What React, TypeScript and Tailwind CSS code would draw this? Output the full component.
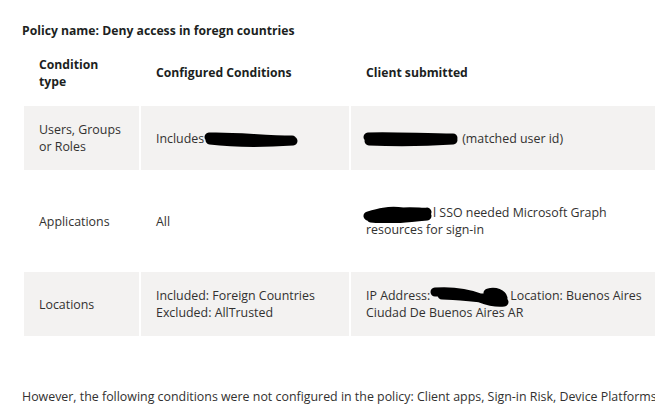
import React from "react";

function Scribble({ w, h, d, sw = 9, className = "" }: { w: number; h: number; d: string; sw?: number; className?: string }) {
  return (
    <svg width={w} height={h} viewBox={`0 0 ${w} ${h}`} className={`inline-block align-middle ${className}`}>
      <path d={d} stroke="#000" strokeWidth={sw} fill="none" strokeLinecap="round" strokeLinejoin="round" />
    </svg>
  );
}

export default function App() {
  const font = { fontFamily: '"Open Sans", "Noto Sans", sans-serif' };
  return (
    <div className="w-[655px] h-[404px] overflow-hidden bg-white text-[#323130] text-[12.4px] leading-[17px]" style={font}>
      <div className="pt-[22px] pl-[22px]">
        <div className="font-bold text-[#201f1e] text-[12.2px] leading-[16px] pt-[1px]">Policy name: Deny access in foregn countries</div>
        <div className="mt-[2px] ml-[2px] grid grid-cols-[115px_208px_400px] grid-rows-[63px_64px_98px_64px] gap-[2px] w-[727px]">
          <div className="flex items-center px-[15px] font-bold text-[12.2px] text-[#201f1e]">Condition<br />type</div>
          <div className="flex items-center px-[15px] font-bold text-[12.2px] text-[#201f1e]">Configured Conditions</div>
          <div className="flex items-center px-[15px] font-bold text-[12.2px] text-[#201f1e]">Client submitted</div>

          <div className="flex items-center px-[15px] bg-[#f3f2f1]">Users, Groups<br />or Roles</div>
          <div className="flex items-center px-[15px] bg-[#f3f2f1]">
            <span className="whitespace-nowrap">
              Includes
              <Scribble w={94} h={16} className="-my-2" d="M5 6 C 30 5, 60 9, 88 9 M6 9 C 30 12, 60 12, 89 10" />
            </span>
          </div>
          <div className="flex items-center pl-[12px] pr-[15px] bg-[#f3f2f1]">
            <span className="whitespace-nowrap">
              <Scribble w={96} h={16} className="-my-2" d="M5 6 C 30 5, 60 7, 90 7 M6 10 C 30 11, 60 11, 90 9" />
              {" "}(matched user id)
            </span>
          </div>

          <div className="flex items-center px-[15px]">Applications</div>
          <div className="flex items-center px-[15px]">All</div>
          <div className="flex items-center pl-[12px] pr-[15px]">
            <span>
              <span className="whitespace-nowrap">
                <Scribble w={70} h={18} className="-my-2" d="M5 11 C 15 8, 25 5, 40 7 C 52 6, 60 8, 64 7 M8 13 C 25 15, 35 14, 64 11" />
                l SSO needed Microsoft Graph
              </span>
              <br />
              <span className="pl-[3px]">resources for sign-in</span>
            </span>
          </div>

          <div className="flex items-center px-[15px] bg-[#f3f2f1]">Locations</div>
          <div className="flex items-center px-[15px] bg-[#f3f2f1]">Included: Foreign Countries<br />Excluded: AllTrusted</div>
          <div className="flex items-center px-[15px] bg-[#f3f2f1]">
            <span>
              <span className="whitespace-nowrap">
                IP Address:
                <Scribble w={80} h={22} className="-my-2" d="M5 6 C 20 5, 35 6, 50 12 C 58 15, 66 17, 74 16 M12 9 C 30 9, 50 13, 72 13 M58 7 C 66 5, 72 8, 73 12" />
                Location: Buenos Aires
              </span>
              <br />
              Ciudad De Buenos Aires AR
            </span>
          </div>
        </div>
        <div className="mt-[52px] whitespace-nowrap">
          However, the following conditions were not configured in the policy: Client apps, Sign-in Risk, Device Platforms
        </div>
      </div>
    </div>
  );
}
